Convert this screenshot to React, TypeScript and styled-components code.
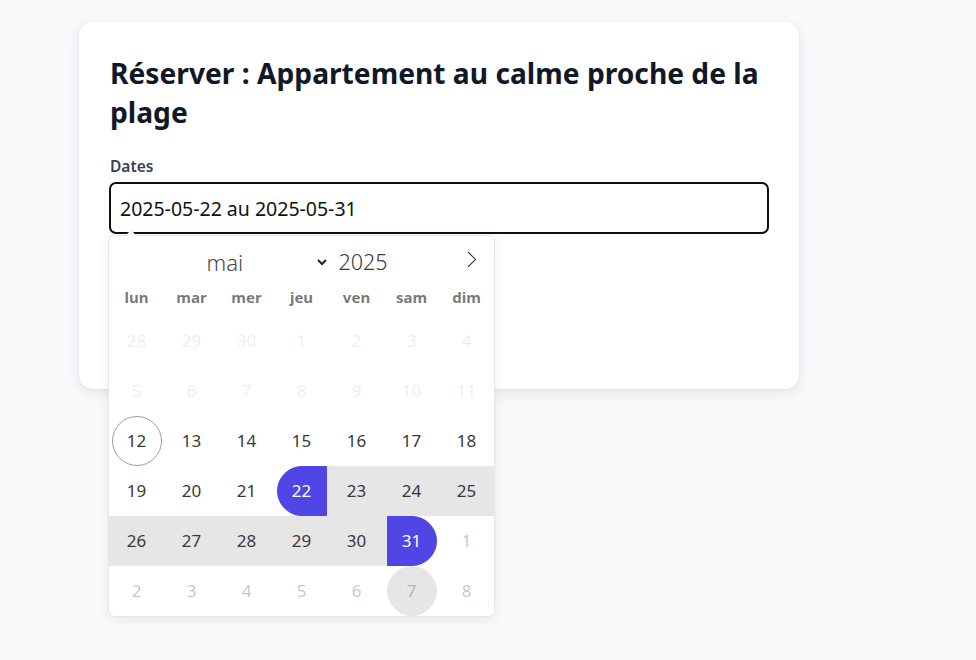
import React from "react";
import styled, { createGlobalStyle, css } from "styled-components";

const Global = createGlobalStyle`
  html, body { margin: 0; padding: 0; background: #f8f9fb; }
  body { font-family: "Noto Sans", "Open Sans", sans-serif; color: #111827; }
  * { box-sizing: border-box; }
`;

const Page = styled.div`
  padding: 22px 0 0 79px;
  min-height: 660px;
`;

const Card = styled.section`
  width: 720px;
  background: #fff;
  border-radius: 14px;
  box-shadow: 0 4px 14px rgba(15, 23, 42, 0.08), 0 1px 3px rgba(15, 23, 42, 0.06);
  padding: 32px 30px 32px 30px;
  display: flex;
  flex-direction: column;
`;

const Title = styled.h1`
  margin: 0 0 22px;
  font-size: 28.2px;
  line-height: 39px;
  font-weight: 700;
  color: #111827;
  padding-left: 1px;
`;

const Label = styled.label`
  font-size: 15.5px;
  font-weight: 600;
  color: #374151;
  margin: 2px 0 6px 1px;
  line-height: 20px;
`;

const Field = styled.div`
  position: relative;
  width: 660px;
`;

const Input = styled.div`
  height: 52px;
  border: 2px solid #111;
  border-radius: 7px;
  padding: 0 9px;
  display: flex;
  align-items: center;
  font-size: 19.5px;
  color: #111;
`;

const Below = styled.div`
  height: 123px;
`;

const Calendar = styled.div`
  position: absolute;
  top: 54px;
  left: 0;
  width: 385px;
  background: #fff;
  border-radius: 5px;
  box-shadow: 1px 0 0 #e6e6e6, -1px 0 0 #e6e6e6, 0 1px 0 #e6e6e6, 0 -1px 0 #e6e6e6,
    0 3px 13px rgba(0, 0, 0, 0.08);
  &::before,
  &::after {
    content: "";
    position: absolute;
    left: 22px;
    bottom: 100%;
    width: 0;
    height: 0;
    border: solid transparent;
  }
  &::before {
    border-width: 6px;
    margin-left: -6px;
    border-bottom-color: #e6e6e6;
  }
  &::after {
    border-width: 5px;
    margin-left: -5px;
    border-bottom-color: #fff;
  }
`;

const MonthBar = styled.div`
  position: relative;
  height: 48px;
  padding: 4px 10px 0 0;
  display: flex;
  align-items: center;
  justify-content: center;
`;

const MonthSelect = styled.div`
  width: 131px;
  display: flex;
  align-items: center;
  justify-content: space-between;
  padding: 0 0 0 10px;
  font-size: 22px;
  line-height: 30px;
  font-weight: 300;
  color: #4a4a4a;
`;

const Year = styled.span`
  margin-left: 11px;
  font-size: 21.5px;
  line-height: 30px;
  font-weight: 300;
  color: #393939;
  width: 58px;
`;

const NextArrow = styled.span`
  position: absolute;
  right: 14px;
  top: 15px;
  display: flex;
`;

const Weekdays = styled.div`
  display: grid;
  grid-template-columns: repeat(7, 55px);
  height: 26px;
  align-items: center;
`;

const Weekday = styled.span`
  text-align: center;
  font-size: 15px;
  line-height: 20px;
  font-weight: 700;
  color: rgba(0, 0, 0, 0.54);
`;

const Days = styled.div`
  display: flex;
  flex-wrap: wrap;
  padding-top: 6px;
  overflow: hidden;
  border-radius: 0 0 5px 5px;
`;

type Kind = "disabled" | "other" | "normal" | "today" | "start" | "end" | "range" | "hover";

const Day = styled.span<{ $kind: Kind }>`
  width: 50px;
  height: 50px;
  margin: 0 2.5px;
  display: flex;
  align-items: center;
  justify-content: center;
  font-size: 17px;
  line-height: 24px;
  color: #393939;
  border: 1px solid transparent;
  border-radius: 150px;
  ${({ $kind }) => {
    switch ($kind) {
      case "disabled":
        return css`color: rgba(57, 57, 57, 0.1);`;
      case "other":
        return css`color: rgba(57, 57, 57, 0.3);`;
      case "today":
        return css`border-color: #959ea9;`;
      case "start":
        return css`
          background: #4f46e5;
          border-color: #4f46e5;
          color: #fff;
          border-radius: 50px 0 0 50px;
        `;
      case "end":
        return css`
          background: #4f46e5;
          border-color: #4f46e5;
          color: #fff;
          border-radius: 0 50px 50px 0;
        `;
      case "range":
        return css`
          background: #e6e6e6;
          border-color: #e6e6e6;
          border-radius: 0;
          box-shadow: -5px 0 0 #e6e6e6, 5px 0 0 #e6e6e6;
        `;
      case "hover":
        return css`
          background: #e6e6e6;
          border-color: #e6e6e6;
          color: rgba(57, 57, 57, 0.3);
        `;
      default:
        return "";
    }
  }}
`;

const weekdays = ["lun", "mar", "mer", "jeu", "ven", "sam", "dim"];

const days: [number, Kind][] = [
  [28, "disabled"], [29, "disabled"], [30, "disabled"], [1, "disabled"], [2, "disabled"], [3, "disabled"], [4, "disabled"],
  [5, "disabled"], [6, "disabled"], [7, "disabled"], [8, "disabled"], [9, "disabled"], [10, "disabled"], [11, "disabled"],
  [12, "today"], [13, "normal"], [14, "normal"], [15, "normal"], [16, "normal"], [17, "normal"], [18, "normal"],
  [19, "normal"], [20, "normal"], [21, "normal"], [22, "start"], [23, "range"], [24, "range"], [25, "range"],
  [26, "range"], [27, "range"], [28, "range"], [29, "range"], [30, "range"], [31, "end"], [1, "other"],
  [2, "other"], [3, "other"], [4, "other"], [5, "other"], [6, "other"], [7, "hover"], [8, "other"],
];

export default function App() {
  return (
    <>
      <Global />
      <Page>
        <Card>
          <Title>Réserver : Appartement au calme proche de la plage</Title>
          <Label>Dates</Label>
          <Field>
            <Input>2025-05-22 au 2025-05-31</Input>
            <Calendar>
              <MonthBar>
                <MonthSelect>
                  <span>mai</span>
                  <svg width="12" height="8" viewBox="0 0 12 8">
                    <polyline points="2,2 6,6 10,2" fill="none" stroke="#222" strokeWidth="2" />
                  </svg>
                </MonthSelect>
                <Year>2025</Year>
                <NextArrow>
                  <svg width="17" height="17" viewBox="0 0 17 17">
                    <path d="M13.207 8.472l-7.854 7.854-0.707-0.707 7.146-7.146-7.146-7.147 0.707-0.707 7.854 7.853z" fill="#222" />
                  </svg>
                </NextArrow>
              </MonthBar>
              <Weekdays>
                {weekdays.map((w) => (
                  <Weekday key={w}>{w}</Weekday>
                ))}
              </Weekdays>
              <Days>
                {days.map(([n, k], i) => (
                  <Day key={i} $kind={k}>
                    {n}
                  </Day>
                ))}
              </Days>
            </Calendar>
          </Field>
          <Below />
        </Card>
      </Page>
    </>
  );
}
